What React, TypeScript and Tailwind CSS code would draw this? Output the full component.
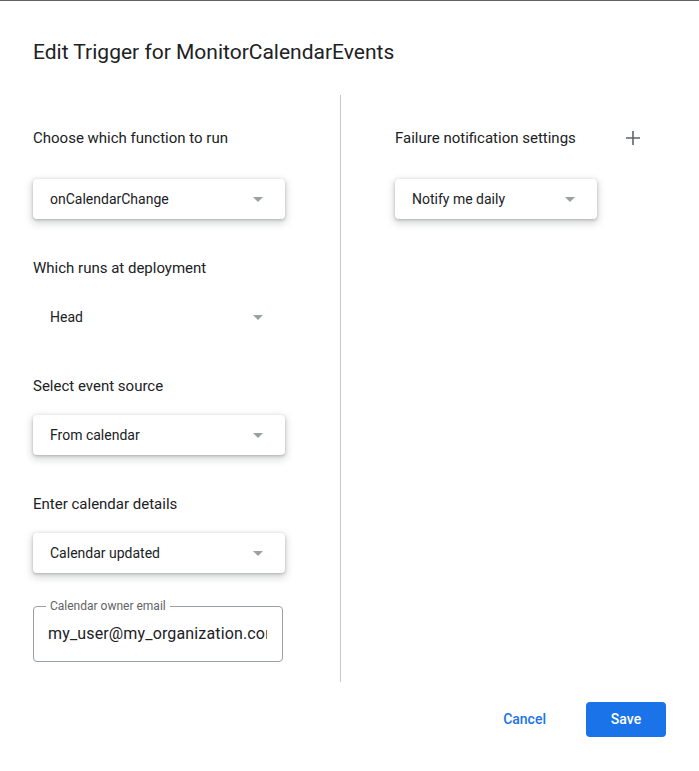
import React from "react";

function Arrow() {
  return (
    <svg width="10" height="5" viewBox="0 0 10 5" className="shrink-0">
      <path d="M0 0 L10 0 L5 5 Z" fill="#9aa0a6" />
    </svg>
  );
}

function Dropdown({ text, w, flat }: { text: string; w: string; flat?: boolean }) {
  return (
    <div
      className={
        "flex h-10 items-center justify-between rounded-[4px] bg-white pl-[17px] pr-[22px] " +
        w +
        (flat ? "" : " shadow-[0_1px_3px_rgba(60,64,67,0.3),0_3px_7px_2px_rgba(60,64,67,0.18)]")
      }
    >
      <span className="text-[14px] text-[#202124]">{text}</span>
      <Arrow />
    </div>
  );
}

function Label({ text }: { text: string }) {
  return <div className="h-5 text-[15px] leading-5 text-[#202124]">{text}</div>;
}

export default function App() {
  return (
    <div
      className="flex h-[771px] w-[699px] flex-col border-t border-[#5f6368] bg-white"
      style={{ fontFamily: "Roboto, 'Noto Sans', Arial, sans-serif" }}
    >
      <div className="mt-[37px] pl-[33px] text-[21px] leading-7 text-[#202124]">
        Edit Trigger for MonitorCalendarEvents
      </div>
      <div className="mt-[29px] flex">
        <div className="flex w-[340px] flex-col pl-[33px] pt-[33px] pb-[20px]">
          <Label text="Choose which function to run" />
          <div className="mt-[31px]">
            <Dropdown text="onCalendarChange" w="w-[252px]" />
          </div>
          <div className="mt-[39px]">
            <Label text="Which runs at deployment" />
          </div>
          <div className="mt-[19px]">
            <Dropdown text="Head" w="w-[252px]" flat />
          </div>
          <div className="mt-[39px]">
            <Label text="Select event source" />
          </div>
          <div className="mt-[19px]">
            <Dropdown text="From calendar" w="w-[252px]" />
          </div>
          <div className="mt-[39px]">
            <Label text="Enter calendar details" />
          </div>
          <div className="mt-[19px]">
            <Dropdown text="Calendar updated" w="w-[252px]" />
          </div>
          <div className="relative mt-[33px] h-[56px] w-[250px] rounded-[4px] border border-[#9aa0a6]">
            <span className="absolute left-[12px] top-[-8px] bg-white px-[4px] text-[12px] leading-[14px] text-[#5f6368]">
              Calendar owner email
            </span>
            <div className="flex h-full items-center overflow-hidden whitespace-nowrap pl-[14px] pr-[15px] text-[16px] tracking-[0.15px] text-[#202124]">
              <div className="overflow-hidden">my_user@my_organization.com</div>
            </div>
          </div>
        </div>
        <div className="w-px bg-[#c8c8c8]" />
        <div className="flex flex-1 flex-col pl-[54px] pt-[33px]">
          <div className="flex h-5 w-[245px] items-center justify-between">
            <span className="text-[15px] leading-5 text-[#202124]">Failure notification settings</span>
            <svg width="14" height="14" viewBox="0 0 14 14">
              <path d="M7 0 V14 M0 7 H14" stroke="#5f6368" strokeWidth="1.6" />
            </svg>
          </div>
          <div className="mt-[31px]">
            <Dropdown text="Notify me daily" w="w-[202px]" />
          </div>
        </div>
      </div>
      <div className="mt-[20px] flex items-center justify-end pr-[33px]">
        <button className="h-[35px] px-[16px] text-[14px] font-medium text-[#1a73e8]">Cancel</button>
        <button className="ml-[24px] h-[35px] w-[80px] rounded-[4px] bg-[#1a73e8] text-[14px] font-medium text-white">
          Save
        </button>
      </div>
    </div>
  );
}
